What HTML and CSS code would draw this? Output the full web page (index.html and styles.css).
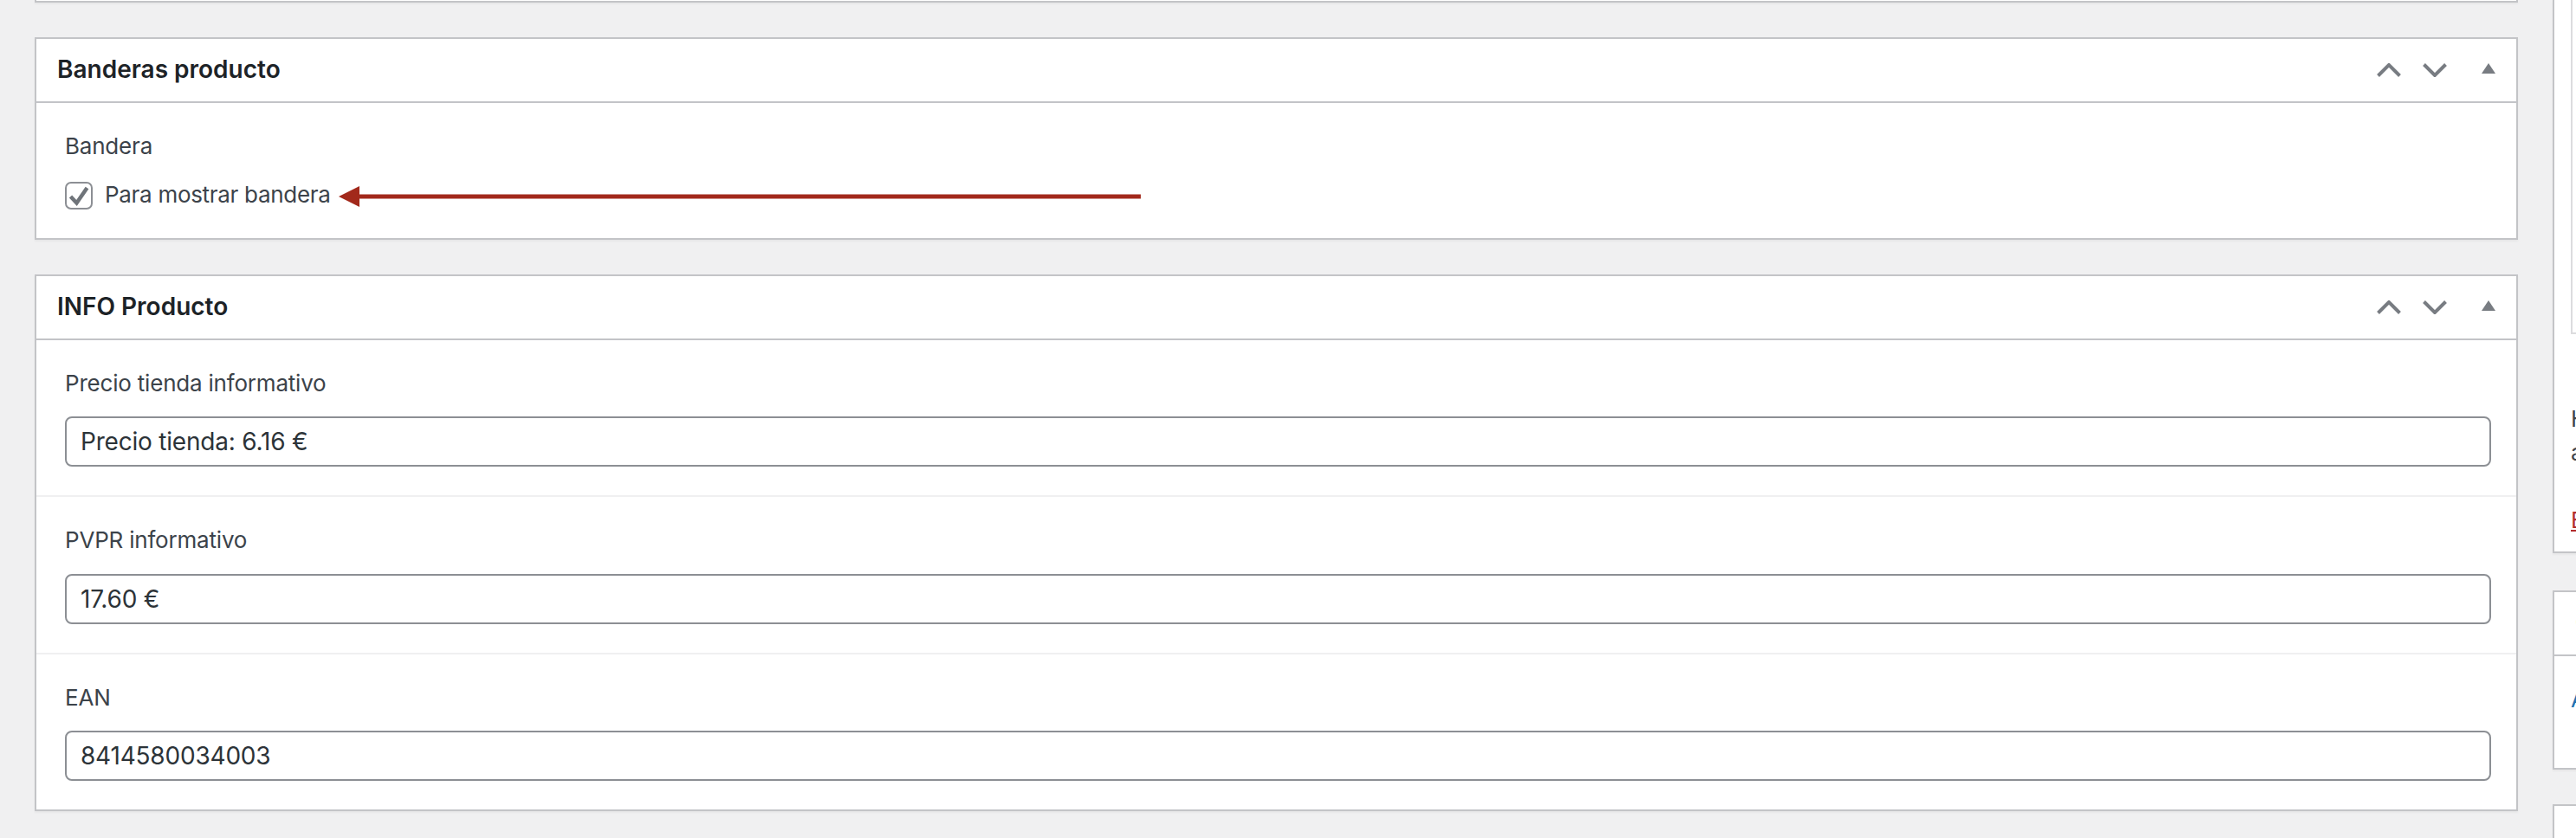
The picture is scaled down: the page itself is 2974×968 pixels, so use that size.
FILE: index.html
```html
<!DOCTYPE html>
<html>
<head>
    <title>Editar producto</title>
    <link rel="stylesheet" href="styles.css">
</head>
<body>
    <div id="wrap">
        <div id="mainCol">
            <div class="postbox stub"></div>

            <div class="postbox">
                <div class="postbox-header">
                    <h2>Banderas producto</h2>
                    <div class="handle-actions">
                        <svg class="chev" width="28" height="16" viewBox="0 0 28 16"><polyline points="1.5,14.5 14,2 26.5,14.5"/></svg>
                        <svg class="chev down" width="28" height="16" viewBox="0 0 28 16"><polyline points="1.5,1.5 14,14 26.5,1.5"/></svg>
                        <svg class="toggle" width="16" height="13" viewBox="0 0 16 13"><polygon points="8,0 16,12 0,12"/></svg>
                    </div>
                </div>
                <div class="inside flags">
                    <div class="field-label">Bandera</div>
                    <label class="check-row">
                        <span class="checkbox">
                            <svg width="28" height="28" viewBox="0 0 28 28"><polyline points="4.5,15 11.5,22.5 23.5,5"/></svg>
                        </span>
                        <span>Para mostrar bandera</span>
                        <svg class="arrow" width="926" height="26" viewBox="0 0 926 26"><polygon points="0,13 24,1 24,25"/><rect x="20" y="10.5" width="906" height="5"/></svg>
                    </label>
                </div>
            </div>

            <div class="postbox">
                <div class="postbox-header">
                    <h2>INFO Producto</h2>
                    <div class="handle-actions">
                        <svg class="chev" width="28" height="16" viewBox="0 0 28 16"><polyline points="1.5,14.5 14,2 26.5,14.5"/></svg>
                        <svg class="chev down" width="28" height="16" viewBox="0 0 28 16"><polyline points="1.5,1.5 14,14 26.5,1.5"/></svg>
                        <svg class="toggle" width="16" height="13" viewBox="0 0 16 13"><polygon points="8,0 16,12 0,12"/></svg>
                    </div>
                </div>
                <div class="field">
                    <div class="field-label">Precio tienda informativo</div>
                    <input type="text" value="Precio tienda: 6.16 €">
                </div>
                <div class="field">
                    <div class="field-label">PVPR informativo</div>
                    <input type="text" value="17.60 €">
                </div>
                <div class="field">
                    <div class="field-label">EAN</div>
                    <input type="text" value="8414580034003">
                </div>
            </div>
        </div>

        <div id="sideCol">
            <div class="postbox side-box first">
                <div class="side-inside">
                    <div class="image-frame"></div>
                    <p class="hint">Haz clic en la imagen para editarla o actualizarla</p>
                    <a class="remove" href="#">Eliminar la imagen del producto</a>
                </div>
            </div>
            <div class="postbox side-box gallery">
                <div class="postbox-header">
                    <h2>Galería del producto</h2>
                </div>
                <div class="side-inside">
                    <a class="add" href="#">Añadir imágenes a la galería del producto</a>
                </div>
            </div>
            <div class="postbox side-box">
                <div class="postbox-header">
                    <h2>Etiquetas del producto</h2>
                </div>
            </div>
        </div>
    </div>
</body>
</html>
```

FILE: styles.css
```css
:root {
    --bg: #f0f0f1;
    --border: #c3c4c7;
    --title: #1d2327;
    --text: #3c434a;
    --input-border: #8c8f94;
    --icon: #787c82;
    --arrow: #a2291b;
}

body {
    margin: 0;
    background: var(--bg);
    font-family: Inter, 'Noto Sans', sans-serif;
    color: var(--text);
    overflow: hidden;
}

#wrap {
    display: grid;
    grid-template-columns: 2867px 560px;
    column-gap: 40px;
    padding-left: 40px;
}

.postbox {
    background: white;
    border: 2px solid var(--border);
    box-shadow: 0 2px 2px rgba(0, 0, 0, 0.04);
    margin-bottom: 40px;
}

.stub {
    height: 1px;
    border-top: none;
}

.postbox-header {
    display: flex;
    align-items: center;
    height: 72px;
    border-bottom: 2px solid var(--border);
}

.postbox-header h2 {
    flex: 1;
    margin: 0;
    padding: 0 24px;
    font-size: 28px;
    line-height: 1.4;
    font-weight: 600;
    color: var(--title);
    white-space: nowrap;
}

.handle-actions {
    display: flex;
    align-items: center;
    padding-right: 24px;
}

.chev {
    fill: none;
    stroke: var(--icon);
    stroke-width: 4;
}

.chev.down {
    margin-left: 25px;
    margin-right: 40px;
}

.toggle {
    fill: var(--icon);
    margin-top: -3px;
}

.field-label {
    font-size: 26px;
    line-height: 1.4;
    letter-spacing: -0.2px;
}

.flags {
    padding: 32px 33px 31px;
}

.check-row {
    display: flex;
    align-items: center;
    margin-top: 20px;
    font-size: 26px;
    line-height: 1.4;
    letter-spacing: -0.3px;
}

.checkbox {
    width: 28px;
    height: 28px;
    border: 2px solid var(--input-border);
    border-radius: 7px;
    margin-right: 14px;
}

.checkbox svg {
    display: block;
    fill: none;
    stroke: #6f747a;
    stroke-width: 4.5;
}

.arrow {
    fill: var(--arrow);
    margin-left: 9px;
    margin-top: 2px;
}

.field {
    padding: 32px 29px 33px 33px;
}

.field + .field {
    border-top: 2px solid var(--bg);
}

.field input {
    display: block;
    box-sizing: border-box;
    width: 100%;
    height: 58px;
    margin-top: 20px;
    padding: 0 16px;
    border: 2px solid var(--input-border);
    border-radius: 8px;
    font-family: inherit;
    font-size: 28px;
    letter-spacing: -0.2px;
    color: #2c3338;
    background: white;
}

/* sidebar, mostly off screen */
.side-box.first {
    border-top: none;
    margin-bottom: 43px;
}

.side-inside {
    padding: 0 20px 17px 19px;
    font-size: 26px;
    line-height: 1.5;
    white-space: nowrap;
}

.image-frame {
    height: 384px;
    border: 2px solid #dcdcde;
    border-top: none;
}

.hint {
    margin: 78px 0 39px;
    white-space: normal;
    width: 480px;
}

.remove {
    color: #b32d2e;
}

.gallery .side-inside {
    padding-top: 30px;
    padding-bottom: 60px;
}

.add {
    color: #2271b1;
    text-decoration: none;
}
```
